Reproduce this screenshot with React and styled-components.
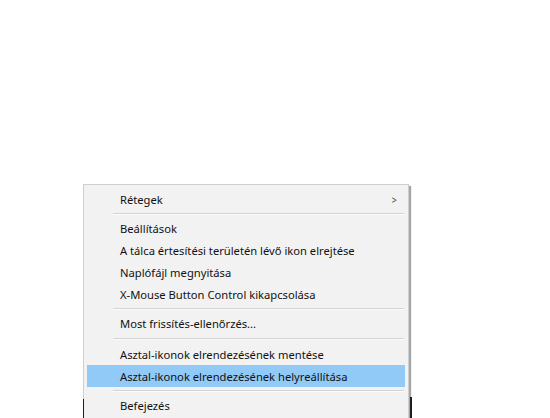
import React from 'react'
import styled, { createGlobalStyle } from 'styled-components'

const GlobalStyle = createGlobalStyle`
    html, body {
        margin: 0;
        padding: 0;
        background: #ffffff;
    }
    body {
        font-family: "Noto Sans", "Open Sans", "Liberation Sans", sans-serif;
        overflow: hidden;
    }
`

const Page = styled.div`
    width: 550px;
    height: 418px;
    padding: 184px 0 0 83px;
    box-sizing: border-box;
    overflow: hidden;
`

const Menu = styled.div`
    position: relative;
    width: 326px;
    box-sizing: border-box;
    background: #f2f2f2;
    border: 1px solid #cfcfcf;
    padding: 3px 2px 4px 2px;
    box-shadow: 2px 2px 1px rgba(0, 0, 0, 0.35);
    /* dark edges of whatever sits behind the menu near the bottom */
    &::before,
    &::after {
        content: '';
        position: absolute;
        top: 214px;
        width: 2px;
        height: 30px;
        background: #1e1e1e;
    }
    &::before {
        left: -1px;
        width: 1px;
    }
    &::after {
        right: -4px;
        top: 212px;
    }
`

const Item = styled.div`
    display: flex;
    align-items: center;
    justify-content: space-between;
    height: 22px;
    margin: 0 1px;
    padding: 0 8px 0 33px;
    font-size: 11.2px;
    color: #111;
    background: ${p => (p.$active ? '#91c9f7' : 'transparent')};
    white-space: nowrap;
`

const Arrow = styled.span`
    font-size: 11px;
    color: #444;
    transform: scaleX(0.8);
`

const Separator = styled.div`
    height: ${p => p.$h || 7}px;
    display: flex;
    align-items: center;
    padding-left: 27px;
    margin-right: 2px;
    &::before {
        content: '';
        flex: 1;
        height: 1px;
        background: #d4d4d4;
        box-shadow: 0 1px 0 #fbfbfb;
    }
`

const groups = [
    [{ label: 'Rétegek', sub: true }],
    [
        { label: 'Beállítások' },
        { label: 'A tálca értesítési területén lévő ikon elrejtése' },
        { label: 'Naplófájl megnyitása' },
        { label: 'X-Mouse Button Control kikapcsolása' },
    ],
    [{ label: 'Most frissítés-ellenőrzés...' }],
    [
        { label: 'Asztal-ikonok elrendezésének mentése' },
        { label: 'Asztal-ikonok elrendezésének helyreállítása', active: true },
    ],
    [{ label: 'Befejezés' }],
]

const App = () => {
    return (
        <Page>
            <GlobalStyle />
            <Menu>
                {groups.map((group, gi) => (
                    <React.Fragment key={gi}>
                        {gi > 0 && <Separator $h={gi === 3 ? 9 : 7} />}
                        {group.map(item => (
                            <Item key={item.label} $active={item.active}>
                                <span>{item.label}</span>
                                {item.sub && <Arrow>&gt;</Arrow>}
                            </Item>
                        ))}
                    </React.Fragment>
                ))}
            </Menu>
        </Page>
    )
}

export default App
